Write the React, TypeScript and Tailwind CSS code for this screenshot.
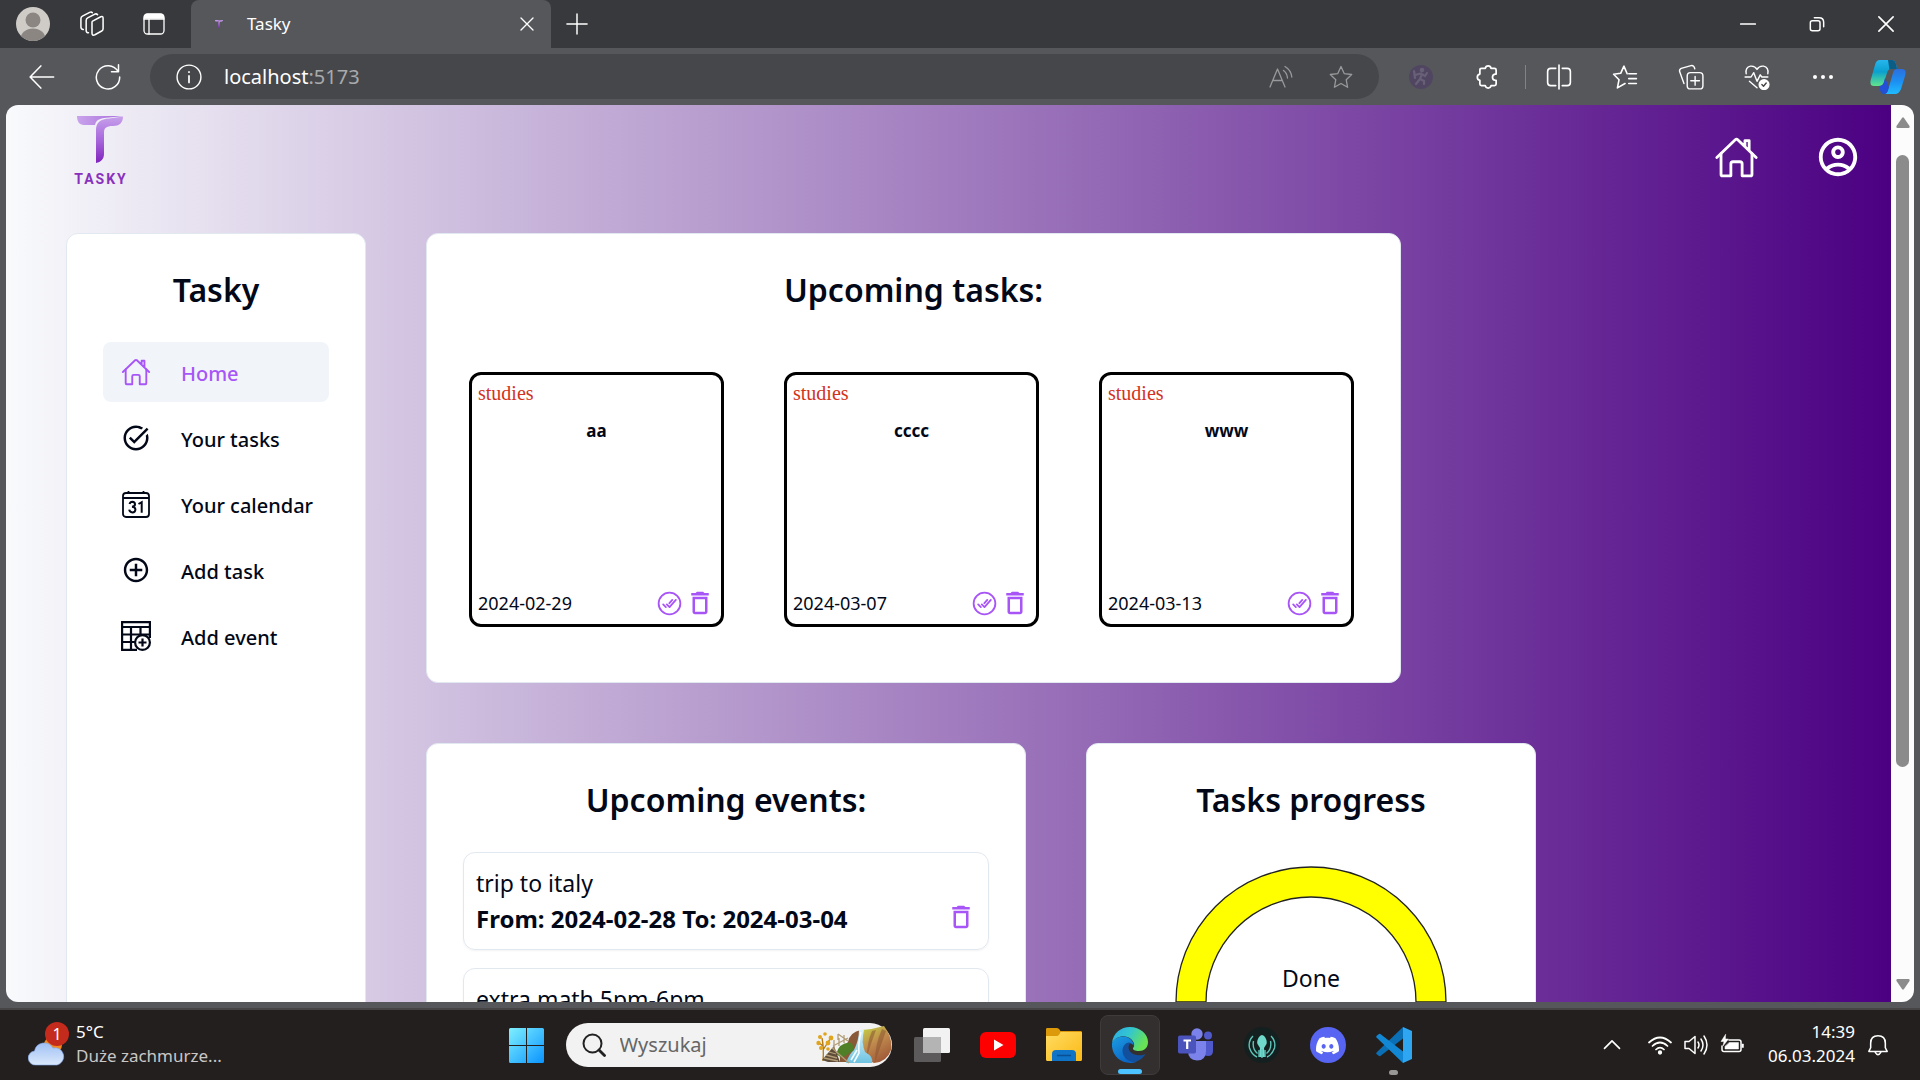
import React, { useId } from "react";
import { IoHomeOutline, IoCheckmarkDoneCircleOutline } from "react-icons/io5";
import { IoMdAddCircleOutline } from "react-icons/io";
import { MdTaskAlt, MdDeleteOutline, MdOutlineAccountCircle } from "react-icons/md";
import { SiDiscord } from "react-icons/si";

type P = { className?: string; children?: React.ReactNode };

function Line({ className = "size-6", children }: P) {
  return (
    <svg viewBox="0 0 24 24" className={className} fill="none" stroke="currentColor" strokeWidth="1.3" strokeLinecap="round" strokeLinejoin="round" aria-hidden="true">
      {children}
    </svg>
  );
}

function TLogo({ className }: P) {
  const id = useId();
  return (
    <svg viewBox="0 0 46 47" className={className} aria-hidden="true">
      <defs>
        <linearGradient id={id + "a"} x1="0" y1="0" x2="0" y2="1">
          <stop offset="0" stopColor="#c6a0ea" />
          <stop offset="0.5" stopColor="#a868dc" />
          <stop offset="1" stopColor="#8023bd" />
        </linearGradient>
        <linearGradient id={id + "b"} x1="0" y1="0" x2="1" y2="0">
          <stop offset="0" stopColor="#c9a3ec" />
          <stop offset="1" stopColor="#a86bdb" />
        </linearGradient>
      </defs>
      <path d="M0 0H46L32 1.500C25 2 19 3 18 9H7C2 9 0 5 0 0Z" fill={"url(#" + id + "b)"} />
      <path d="M46 0.500C46 7 42 10 36 10C29 10 27 12 27 17V38C27 43 24 46 19 47V14C19 6 24 3 32 2.500Z" fill={"url(#" + id + "a)"} />
    </svg>
  );
}

function CalendarAdd({ className }: P) {
  return (
    <svg viewBox="0 0 30 30" className={className} fill="none" stroke="currentColor" strokeWidth="2.2" aria-hidden="true">
      <path d="M16 28.900H1.100V1.100H28.900V17M1 6H29M1 13.500H29M1 21H14M10 6V29M19.500 6V13" />
      <circle cx="21.500" cy="21.500" r="7.400" />
      <path d="M21.500 17.500V25.500M17.500 21.500H25.500" />
    </svg>
  );
}

function CalendarDay({ className }: P) {
  return (
    <svg viewBox="0 0 28 28" className={className} fill="none" stroke="currentColor" strokeWidth="1.8" aria-hidden="true">
      <rect x="1" y="3" width="26" height="24" rx="3" />
      <path d="M1 8H27M6.500 1V4M21.500 1V4" />
      <path d="M7.500 14Q8.200 11.800 10.300 11.800Q13 11.900 13 14.300Q13 16.500 10 16.700Q13.400 16.900 13.400 19.700Q13.200 22.400 10.400 22.400Q7.600 22.300 7.200 19.700M16.500 14L19.700 12.200V22.700" strokeWidth="2" />
    </svg>
  );
}

function IconButton({ label, className = "", children }: P & { label: string }) {
  return (
    <button type="button" aria-label={label} className={"flex shrink-0 items-center justify-center " + className}>
      {children}
    </button>
  );
}

function TabStrip() {
  return (
    <div className="flex h-12 shrink-0 items-stretch bg-[#38393c] text-white">
      <div className="flex w-[191px] items-center pl-4">
        <IconButton label="Profile" className="size-[34px]">
          <svg viewBox="0 0 34 34" className="size-[34px]" aria-hidden="true">
            <clipPath id="avatar"><circle cx="17" cy="17" r="17" /></clipPath>
            <circle cx="17" cy="17" r="17" fill="#cfccc8" />
            <g clipPath="url(#avatar)" fill="#8b8682">
              <circle cx="17" cy="13" r="7.500" />
              <ellipse cx="17" cy="32" rx="12.500" ry="10.500" />
            </g>
          </svg>
        </IconButton>
        <IconButton label="Workspaces" className="ml-7">
          <Line className="size-7">
            <path d="M12.500 9.500L19.500 5.800Q21.500 5 21.500 7V16Q21.500 17.300 20.300 18L14.500 21.200Q12 22.300 12 20V10.500Q12 9.800 12.500 9.500Z" />
            <path d="M9 19.500Q7 19.500 7 17.500V9Q7 7.500 8.300 6.800L14.500 3.500Q16 3 16.800 4" />
            <path d="M4.500 16.800Q2.500 16.500 2.500 14.500V7.500Q2.500 6 3.800 5.300L10 2Q11.500 1.300 12.300 2.300" />
          </Line>
        </IconButton>
        <IconButton label="Tab actions" className="ml-9">
          <Line>
            <rect x="2" y="2" width="20" height="20" rx="3.500" />
            <path d="M2.500 6V5Q2.500 2.500 5 2.500H19Q21.500 2.500 21.500 5V6Z" fill="currentColor" />
            <path d="M2 7H22M7 7V22" />
          </Line>
        </IconButton>
      </div>
      <div role="tab" aria-selected="true" className="flex w-[360px] items-center rounded-t-lg bg-[#56575b] pr-4 pl-6">
        <TLogo className="h-3 w-2" />
        <span className="ml-6 flex-1 text-[17px]">Tasky</span>
        <IconButton label="Close tab">
          <Line className="size-4"><path strokeWidth="2" d="M3 3L21 21M21 3L3 21" /></Line>
        </IconButton>
      </div>
      <IconButton label="New tab" className="w-[52px]">
        <Line className="size-[22px]"><path strokeWidth="1.600" d="M12 1V23M1 12H23" /></Line>
      </IconButton>
      <div className="flex-1" />
      <IconButton label="Minimize" className="w-[69px]">
        <Line className="size-4"><path strokeWidth="2.500" d="M1 12H23" /></Line>
      </IconButton>
      <IconButton label="Restore" className="w-[69px]">
        <Line className="size-4"><rect strokeWidth="2.200" x="2" y="7" width="14.500" height="15" rx="3" /><path strokeWidth="2.200" d="M8 2.500H15Q22 2.500 22 9.500V16" /></Line>
      </IconButton>
      <IconButton label="Close window" className="w-[69px]">
        <Line className="size-[18px]"><path strokeWidth="2.200" d="M2.500 2.500L21.500 21.500M21.500 2.500L2.500 21.500" /></Line>
      </IconButton>
    </div>
  );
}

function Copilot() {
  return (
    <svg viewBox="0 0 36 34" className="h-[34px] w-9" aria-hidden="true">
      <defs>
        <linearGradient id="cpA" x1="0.300" y1="0" x2="0.300" y2="1"><stop offset="0" stopColor="#27b6ee" /><stop offset="0.450" stopColor="#0aa0cf" /><stop offset="1" stopColor="#62e48c" /></linearGradient>
        <linearGradient id="cpB" x1="0" y1="0" x2="0" y2="1"><stop offset="0" stopColor="#2c6fe0" /><stop offset="0.500" stopColor="#1c8ff2" /><stop offset="1" stopColor="#1fbcff" /></linearGradient>
      </defs>
      <path d="M10 0H22Q25 0 26 4L27 9H21Q18 9 17 13L14 22Q13 26 9 26H4Q-1 26 1 19L5 5Q6 0 10 0Z" fill="url(#cpA)" />
      <path d="M18 0H22Q25 0 26 4L27 9H21Q20 9 19.500 10Z" fill="#0b5d86" />
      <path d="M27 9H32Q37 9 35 16L31 29Q29 34 25 34H14Q17 34 18 30L23 13Q24 9 27 9Z" fill="url(#cpB)" />
      <path d="M9 26Q13 26 14 22L15 18L19 27L18 30Q17 34 14 34Q11 34 10 30Z" fill="#2350d6" />
    </svg>
  );
}

function Toolbar() {
  return (
    <div className="flex h-[57px] shrink-0 items-center bg-[#56575b] text-white">
      <div className="flex w-[150px] items-center gap-[38px] pl-[28px]">
        <IconButton label="Back"><Line className="size-7"><path d="M22 12H2M11 2.500L1.800 12L11 21.500" /></Line></IconButton>
        <IconButton label="Refresh"><Line className="size-7"><path d="M20.500 7A10 10 0 1 0 22 12M21 1.500V7.500H15" /></Line></IconButton>
      </div>
      <div className="flex h-[45px] flex-1 items-center rounded-full bg-[#46474a] pr-[26px] pl-[26px]">
        <Line className="size-[26px]"><circle cx="12" cy="12" r="11" /><path d="M12 11V17M12 7.300V7.500" strokeWidth="1.600" /></Line>
        <div className="ml-[22px] flex flex-1 items-center text-[20px] leading-7">
          <input aria-label="Address" defaultValue="localhost" className="field-sizing-content bg-transparent outline-none" />
          <span className="text-[#a9aaac]">:5173</span>
        </div>
        <div className="flex items-center gap-9 text-[#98999b]">
          <IconButton label="Read aloud">
            <Line><path d="M1 22L8.500 4L16 22M3.800 15.500H13.200M14.500 5.500Q18 8 18.500 13M16 1.500Q22 5 22.800 12" /></Line>
          </IconButton>
          <IconButton label="Add to favorites">
            <Line><path d="M12 1.500L15.200 8.600L22.700 9.500L17.200 14.700L18.600 22.300L12 18.500L5.400 22.300L6.800 14.700L1.300 9.500L8.800 8.600Z" /></Line>
          </IconButton>
        </div>
      </div>
      <div className="flex items-center pl-[30px]">
        <IconButton label="Extension" className="size-6">
          <svg viewBox="0 0 24 24" className="size-6" aria-hidden="true">
            <circle cx="12" cy="12" r="12" fill="#514662" />
            <g fill="none" stroke="#676076" strokeWidth="2.2" strokeLinecap="round">
              <path d="M13 9L11 14L7 19M11 14L15 16V19M6 10L12 8.500L16 11L18 8M5 6L6 13" />
              <circle cx="13" cy="5" r="1.200" />
            </g>
          </svg>
        </IconButton>
        <IconButton label="Extensions" className="ml-[42px]">
          <Line className="size-[26px]"><path strokeWidth="1.6" d="M9.500 4A2.700 2.700 0 0 1 14.800 4H18Q19.500 4 19.500 5.500V9.300H18.500A2.900 2.900 0 0 0 18.500 15H19.500V18.500Q19.500 20 18 20H14.800A2.700 2.700 0 0 1 9.500 20H6Q4.500 20 4.500 18.500V15A2.900 2.900 0 0 1 4.500 9.300V5.500Q4.500 4 6 4Z" /></Line>
        </IconButton>
        <div className="mr-5 ml-6 h-6 w-px bg-[#828386]" />
        <div className="flex items-center gap-10">
          <IconButton label="Split screen">
            <Line className="size-[26px]"><path d="M9 4H4.500Q1.500 4 1.500 7V17Q1.500 20 4.500 20H9M15 4H19.500Q22.500 4 22.500 7V17Q22.500 20 19.500 20H15M12 1V23" strokeWidth="1.500" /></Line>
          </IconButton>
          <IconButton label="Favorites">
            <Line className="size-[26px]"><path d="M14 9L11 2L8 8.600L1.500 9.500L6.500 14.500L5 22L12 18M15.500 9H22.500M15.500 13.500H22.500M15.500 18H22.500" strokeWidth="1.500" /></Line>
          </IconButton>
          <IconButton label="Collections">
            <Line className="size-[26px]"><rect x="8.500" y="8" width="14.500" height="15" rx="3" /><path d="M15.800 11.500V19.500M11.800 15.500H19.800M5.500 18L1.500 7Q1 5 3 4L12 1.500Q15 1 15.500 4.500" /></Line>
          </IconButton>
          <IconButton label="Browser essentials">
            <Line className="size-[26px]"><path d="M2 9Q1 3 6 2Q10 1.500 12 5Q14 1.500 18 2Q23 3 22 9M1 12H6.500L9 8L12 16L15 10L16.500 12H22M5 16L12 22" /><circle cx="18.500" cy="19" r="4.500" fill="currentColor" /><path d="M16.500 19L18 20.500L20.500 17.500" stroke="#46474a" /></Line>
          </IconButton>
          <IconButton label="Settings and more" className="h-6 w-[26px] gap-1">
            <span className="size-1 rounded-full bg-white" />
            <span className="size-1 rounded-full bg-white" />
            <span className="size-1 rounded-full bg-white" />
          </IconButton>
        </div>
        <IconButton label="Copilot" className="mr-[14px] ml-[34px]"><Copilot /></IconButton>
      </div>
    </div>
  );
}

const nav = [
  { label: "Home", icon: <IoHomeOutline className="size-[30px]" />, active: true },
  { label: "Your tasks", icon: <MdTaskAlt className="size-[30px]" /> },
  { label: "Your calendar", icon: <CalendarDay className="size-[28px]" /> },
  { label: "Add task", icon: <IoMdAddCircleOutline className="size-[30px]" /> },
  { label: "Add event", icon: <CalendarAdd className="size-[30px]" /> },
];

const tasks = [
  { name: "aa", date: "2024-02-29" },
  { name: "cccc", date: "2024-03-07" },
  { name: "www", date: "2024-03-13" },
];

const events = [
  { name: "trip to italy", from: "2024-02-28", to: "2024-03-04" },
  { name: "extra math 5pm-6pm", from: "2024-03-06", to: "2024-03-06" },
];

function Title({ children }: P) {
  return <h2 className="text-center text-[32px] leading-9 font-semibold">{children}</h2>;
}

function Sidebar() {
  return (
    <aside className="w-[300px] shrink-0 rounded-xl border border-slate-200 bg-white px-9 pt-[38px]">
      <Title>Tasky</Title>
      <nav className="mt-[34px] flex flex-col gap-1.5">
        {nav.map((n) => (
          <a key={n.label} href="#" className={"flex h-[60px] items-center rounded-lg pl-4 text-[20px] font-medium " + (n.active ? "bg-slate-100 text-[#a855f7]" : "text-[#020817]")}>
            <span className="flex w-[34px] justify-center">{n.icon}</span>
            <span className="pt-1 pl-7">{n.label}</span>
          </a>
        ))}
      </nav>
    </aside>
  );
}

function Page() {
  return (
    <main className="min-w-0 flex-1 overflow-hidden bg-[linear-gradient(90deg,#f8fafc,#4b0082)] pr-[34px] pl-[60px] text-[#020817]">
      <header className="flex h-32 items-start justify-between">
        <a href="#" aria-label="Tasky home" className="flex w-[68px] flex-col items-center pt-[11px]">
          <TLogo className="h-[47px] w-[46px]" />
          <span className="mt-1 pl-0.5 font-[Roboto,sans-serif] text-[14px] leading-6 font-bold tracking-[2px] text-[#8a30bd]">TASKY</span>
        </a>
        <div className="flex items-center gap-14 pt-[29px] text-white">
          <a href="#" aria-label="Home"><IoHomeOutline className="size-[45px]" /></a>
          <a href="#" aria-label="Account"><MdOutlineAccountCircle className="-mr-1 size-[46px]" /></a>
        </div>
      </header>
      <div className="flex items-stretch gap-[60px]">
        <Sidebar />
        <div className="flex flex-col gap-[60px]">
          <section className="h-[450px] w-[975px] rounded-xl border border-slate-200 bg-white px-[42px] pt-[38px]">
            <Title>Upcoming tasks:</Title>
            <div className="mt-16 flex gap-[60px]">
              {tasks.map((t) => (
                <article key={t.name} className="flex size-[255px] flex-col rounded-xl border-3 border-black px-1.5 pt-1 pb-1.5">
                  <p className="font-['Liberation_Serif',serif] text-[20px] leading-7 text-[#d33220]">studies</p>
                  <h3 className="mt-2.5 text-center text-[17px] leading-7 font-bold">{t.name}</h3>
                  <div className="mt-auto flex items-center justify-between">
                    <time className="text-[18px] leading-7">{t.date}</time>
                    <div className="flex items-center gap-px text-[#a855f7]">
                      <IconButton label="Mark as done"><IoCheckmarkDoneCircleOutline className="size-[29px]" /></IconButton>
                      <IconButton label="Delete task"><MdDeleteOutline className="size-[30px]" /></IconButton>
                    </div>
                  </div>
                </article>
              ))}
            </div>
          </section>
          <div className="flex items-start gap-[60px]">
            <section className="w-[600px] rounded-xl border border-slate-200 bg-white px-9 pt-[38px] pb-9">
              <Title>Upcoming events:</Title>
              <ul className="mt-[34px] flex flex-col gap-[18px]">
                {events.map((e) => (
                  <li key={e.name} className="flex h-[98px] items-center justify-between rounded-xl border border-slate-200 pr-3 pl-3 shadow-xs">
                    <div className="text-[23px] leading-9">
                      <p>{e.name}</p>
                      <p className="text-[24px] font-bold">From: {e.from} To: {e.to}</p>
                    </div>
                    <IconButton label="Delete event" className="pt-8 text-[#a855f7]"><MdDeleteOutline className="size-[30px]" /></IconButton>
                  </li>
                ))}
              </ul>
            </section>
            <section className="w-[450px] rounded-xl border border-slate-200 bg-white px-9 pt-[38px] pb-9">
              <Title>Tasks progress</Title>
              <svg viewBox="0 0 300 300" className="mx-auto mt-[34px] block size-[300px]" role="img" aria-label="Done">
                <path d="M15 150A135 135 0 0 1 285 150H255A105 105 0 0 0 45 150Z" fill="#ffff00" stroke="#222" strokeWidth="1.300" />
                <text x="150" y="135" textAnchor="middle" fontSize="23" fill="#020817">Done</text>
              </svg>
            </section>
          </div>
        </div>
      </div>
    </main>
  );
}

function Scrollbar() {
  return (
    <div className="flex w-[23px] shrink-0 flex-col items-center bg-[#fcfcfc] pt-3 pb-3 text-[#8b8b8b]">
      <svg viewBox="0 0 14 11" className="w-[14px]" fill="currentColor" aria-hidden="true"><path d="M6 1Q7-.5 8 1L13.500 9Q14 11 12.500 11H1.500Q0 11 .5 9Z" /></svg>
      <div className="mt-[27px] h-[612px] w-[13px] rounded-full bg-[#8b8b8b]" />
      <div className="flex-1" />
      <svg viewBox="0 0 14 11" className="w-[14px] rotate-180" fill="currentColor" aria-hidden="true"><path d="M6 1Q7-.5 8 1L13.500 9Q14 11 12.500 11H1.500Q0 11 .5 9Z" /></svg>
    </div>
  );
}

function Weather() {
  return (
    <svg viewBox="0 0 42 44" className="h-11 w-[42px]" aria-hidden="true">
      <defs><linearGradient id="cloud" x1="0" y1="0" x2="0" y2="1"><stop offset="0" stopColor="#9fc0f5" /><stop offset="1" stopColor="#dbe9fb" /></linearGradient></defs>
      <circle cx="25" cy="23" r="9" fill="#f58a1f" />
      <path d="M8 43A7 7 0 0 1 6.500 29A10 10 0 0 1 25 26A8.500 8.500 0 0 1 29 43Z" fill="url(#cloud)" stroke="#7fa5ea" strokeWidth=".6" />
      <circle cx="29" cy="12" r="12" fill="#c42b1c" />
      <text x="29" y="18" textAnchor="middle" fontSize="16" fill="#fff">1</text>
    </svg>
  );
}

function SearchArt() {
  return (
    <svg viewBox="0 0 76 38" className="h-[38px] w-[76px]" aria-hidden="true">
      <defs>
        <linearGradient id="hill" x1="0.200" y1="0" x2="0.700" y2="1"><stop offset="0" stopColor="#c3cc45" /><stop offset="0.450" stopColor="#c08a4e" /><stop offset="1" stopColor="#9c5535" /></linearGradient>
        <linearGradient id="fall" x1="0" y1="0" x2="0" y2="1"><stop offset="0" stopColor="#d9f3fb" /><stop offset="1" stopColor="#6ec3e0" /></linearGradient>
      </defs>
      <path d="M24 36Q22 24 32 16Q34 6 45 4L50 36Z" fill="#8a5a38" />
      <path d="M20 28Q24 15 36 17L38 24L26 32Z" fill="#4f7f26" />
      <path d="M46 4Q58 3 68 0Q77 12 75 24Q71 36 58 37L48 32Z" fill="url(#hill)" />
      <path d="M56 5Q51 16 51 31Q54 20 60 4ZM66 3Q59 18 59 36Q64 22 70 5Z" fill="#8a5330" opacity=".55" />
      <path d="M43 4H48Q45 16 49 26Q58 31 56 37H30Q33 28 38 24Q43 14 43 4Z" fill="url(#fall)" />
      <path d="M45 6Q42 18 43 27L38 36M41 24L35 34" stroke="#f4fdff" strokeWidth="1.600" fill="none" />
      <path d="M7 35Q8 22 6 12M7 24L14 13M7 20L2 16" stroke="#b5760f" strokeWidth="1.300" fill="none" />
      <g fill="#e0a51c"><circle cx="4" cy="11" r="2" /><circle cx="9" cy="8" r="1.800" /><circle cx="15" cy="12" r="2.400" /><circle cx="2.500" cy="17" r="2.200" /><circle cx="12" cy="17" r="2.400" /><circle cx="5" cy="22" r="2" /><circle cx="12" cy="23" r="1.800" /></g>
      <path d="M6 34L18 20L24 36H12Z" fill="#5e4c39" />
      <path d="M8 32L22 35M10 29L21 32M13 26L20 28M16 22L33 37M17 20L32 12M22 8L32 15M18 14V24M23 12V20M28 9V17M22 8V14" stroke="#b39d77" strokeWidth="1.300" fill="none" />
    </svg>
  );
}

function EdgeLogo() {
  return (
    <svg viewBox="0 0 36 36" className="size-9" aria-hidden="true">
      <defs>
        <linearGradient id="egA" x1="0" y1="0" x2="1" y2="0.400"><stop offset="0" stopColor="#2aa9e8" /><stop offset="0.500" stopColor="#33c6cf" /><stop offset="1" stopColor="#67e355" /></linearGradient>
        <linearGradient id="egB" x1="0" y1="0" x2="0.600" y2="1"><stop offset="0" stopColor="#1b9de2" /><stop offset="1" stopColor="#0b63c4" /></linearGradient>
      </defs>
      <path d="M0 16C1 6 9 0 18 0C28 0 36 7 36 15C36 21 32 24 27 24C23 24 20.500 23 21 21C23 19 22.500 15 19 12C13 7 4 9 0 16Z" fill="url(#egA)" />
      <path d="M0 16C3 10 10 8 16 10.500C20 12.500 22 16 21.500 19C20 15 14 15 12.500 20C10.500 27 16 35 25 34.500C23 36 20 36 18 36C8 36-1 28 0 16Z" fill="url(#egB)" />
      <path d="M15 16C7 20 10 34 22 35C27 34.500 31 31 33.500 27C30 29 22 29 18.500 25C15 21 17 17 19 16Q17 15 15 16Z" fill="#124f9c" />
    </svg>
  );
}

function TeamsLogo() {
  return (
    <svg viewBox="0 0 36 34" className="h-[34px] w-9" aria-hidden="true">
      <circle cx="30" cy="7.500" r="4" fill="#5059c9" />
      <path d="M24 13H35V23Q35 28 30 28Q26 28 24 25Z" fill="#5059c9" />
      <circle cx="19" cy="6" r="5.700" fill="#7b83eb" />
      <path d="M10 13H28V23Q28 32.500 19 32.500Q10 32 10 23Z" fill="#7b83eb" />
      <rect x="0" y="7.500" width="18" height="18" rx="1.800" fill="#4b53bc" />
      <path d="M5.500 12.500H13M9.200 12.500V21" stroke="#fff" strokeWidth="2.200" />
    </svg>
  );
}

function KrakenLogo() {
  return (
    <svg viewBox="0 0 36 36" className="size-9" aria-hidden="true">
      <circle cx="18" cy="18" r="18" fill="#14201f" />
      <path d="M18 8C22 9 23.500 15 22.500 17L20 21L21 30H15L16 21L13.500 17C12.500 15 14 9 18 8Z" fill="#6fd9cb" />
      <path d="M9 9Q4 14 5.500 21Q8 28 13 30M27 9Q32 14 30.500 21Q28 28 23 30M9.500 14Q8 22 13.500 26.500M26.500 14Q28 22 22.500 26.500M18 22V31M15 23V30M21 23V30" stroke="#5fc4b8" strokeWidth="1.400" fill="none" />
    </svg>
  );
}

function CodeLogo() {
  return (
    <svg viewBox="0 0 36 36" className="size-9" aria-hidden="true">
      <path d="M1 25Q-.5 26.500 1 27.500L3 29Q4 29.500 5 28.500L29 10L27 0Z" fill="#0a6fb4" />
      <path d="M1 11Q-.5 9.500 1 8.500L3 7Q4 6.500 5 7.500L29 26L27 36Z" fill="#1287d3" />
      <path d="M27 0L36 4V32L27 36Z" fill="#2ea6f2" />
    </svg>
  );
}

function Taskbar() {
  return (
    <footer className="grid h-[70px] shrink-0 grid-cols-[1fr_auto_1fr] items-center bg-[#231f1e] text-white">
      <button type="button" className="flex items-center gap-1.5 pb-0.5 pl-7 text-left">
        <Weather />
        <span className="text-[17px] leading-6">
          <span className="block">5°C</span>
          <span className="block text-[#c9c7c6]">Duże zachmurze...</span>
        </span>
      </button>
      <div className="flex items-center gap-[30px]">
        <IconButton label="Start" className="mr-[-8px]">
          <svg viewBox="0 0 35 35" className="size-[35px]" aria-hidden="true">
            <defs><linearGradient id="win" gradientUnits="userSpaceOnUse" x1="0" y1="0" x2="35" y2="35"><stop offset="0" stopColor="#7ff0ff" /><stop offset="1" stopColor="#0a94ff" /></linearGradient></defs>
            <path fill="url(#win)" d="M1.500 0H17V17H0V1.500Q0 0 1.500 0ZM18 0H33.500Q35 0 35 1.500V17H18ZM0 18H17V35H1.500Q0 35 0 33.500ZM18 18H35V33.500Q35 35 33.500 35H18Z" />
          </svg>
        </IconButton>
        <div className="mr-[-8px] flex h-11 w-[326px] items-center rounded-full bg-[#f2f2f2] pl-4 text-[#222]">
          <svg viewBox="0 0 24 24" className="size-6" fill="none" stroke="currentColor" strokeWidth="2" strokeLinecap="round" aria-hidden="true"><circle cx="10.500" cy="10.500" r="9" /><path d="M17 17L22.500 22.500" strokeWidth="2.800" /></svg>
          <input aria-label="Wyszukaj" placeholder="Wyszukaj" className="ml-3.5 w-0 flex-1 bg-transparent text-[20px] outline-none placeholder:text-[#666]" />
          <SearchArt />
        </div>
        <IconButton label="Task view">
          <svg viewBox="0 0 36 34" className="h-[34px] w-9" aria-hidden="true"><rect x="0" y="9" width="27" height="25" rx="1.500" fill="#5c5a5a" /><rect x="9" y="0" width="27" height="25" rx="1.500" fill="#f2f2f2" /><path d="M9 9H27V25H9Z" fill="#b5b4b4" /></svg>
        </IconButton>
        <IconButton label="YouTube">
          <svg viewBox="0 0 36 26" className="h-[26px] w-9" aria-hidden="true"><rect width="36" height="26" rx="6" fill="#f00" /><path d="M14 7.500V18.500L23.500 13Z" fill="#fff" /></svg>
        </IconButton>
        <IconButton label="File Explorer">
          <svg viewBox="0 0 36 34" className="h-[34px] w-9" aria-hidden="true">
            <defs><linearGradient id="fold" x1="0" y1="0" x2="1" y2="1"><stop offset="0" stopColor="#ffdc62" /><stop offset="1" stopColor="#fbb916" /></linearGradient></defs>
            <path d="M0 1Q0 0 1.500 0H11Q13 0 14.500 3H35Q36 3 36 4.500V10H0Z" fill="#dc9a0b" />
            <path d="M0 8H11Q13 8 14.500 4H35Q36 4 36 5V31.500Q36 33 34.500 33H1.500Q0 33 0 31.500Z" fill="url(#fold)" />
            <path d="M6 33V26Q6 22 10 22H26Q30 22 30 26V33Z" fill="#0f74c8" /><path d="M11 27.500H25" stroke="#0a4f92" strokeWidth="1.500" />
          </svg>
        </IconButton>
        <IconButton label="Microsoft Edge" className="relative -mx-3 size-[60px] rounded-lg border border-[#3f3b3a] bg-[#332f2e]">
          <EdgeLogo />
          <span className="absolute bottom-0 h-[5px] w-6 rounded-full bg-[#4cc2ff]" />
        </IconButton>
        <IconButton label="Teams"><TeamsLogo /></IconButton>
        <IconButton label="GitKraken"><KrakenLogo /></IconButton>
        <IconButton label="Discord" className="size-9 rounded-full bg-[#5865f2]"><SiDiscord className="size-[23px]" /></IconButton>
        <IconButton label="Visual Studio Code" className="relative h-[60px]">
          <CodeLogo />
          <span className="absolute bottom-0 h-[5px] w-[9px] rounded-full bg-[#9a9897]" />
        </IconButton>
      </div>
      <div className="flex items-center justify-end pr-[31px]">
        <IconButton label="Hidden icons" className="mr-[26px]"><Line className="size-5"><path strokeWidth="2" d="M3 16L12 7L21 16" /></Line></IconButton>
        <IconButton label="Network and sound" className="gap-3">
          <Line><path d="M1 9.500Q12-.5 23 9.500M4.500 13Q12 6 19.500 13M8 16.500Q12 12.500 16 16.500" strokeWidth="1.700" /><circle cx="12" cy="19.500" r="1.500" fill="currentColor" /></Line>
          <Line><path d="M1 8.500H5L11 3.500V20.500L5 15.500H1ZM14 9Q16 12 14 15M17 6Q21 12 17 18M20 3Q26 12 20 21" strokeWidth="1.500" /></Line>
          <Line><path d="M5 18.500H19Q21 18.500 21 16.500V9Q21 7 19 7H9M2 13V16.500Q2 18.500 4 18.500" strokeWidth="1.500" /><path d="M9.500 9.500H18.500V16H5V13.500ZM22 11H23.500V14.500H22ZM5.500 1.500L1 8.500H4L3 13L8.500 6H5.500Z" fill="currentColor" strokeWidth=".5" /></Line>
        </IconButton>
        <time className="ml-6 pb-0.5 text-right text-[17px] leading-6">14:39<br />06.03.2024</time>
        <IconButton label="Notifications" className="ml-3"><Line className="size-[22px]"><path strokeWidth="1.700" d="M2 19H22L20 15V10Q20 2 12 2Q4 2 4 10V15ZM9 20Q12 25 15 20" /></Line></IconButton>
      </div>
    </footer>
  );
}

export default function App() {
  return (
    <div className="flex h-screen flex-col overflow-hidden bg-[#56575b] font-['Noto_Sans','Open_Sans',sans-serif]">
      <TabStrip />
      <Toolbar />
      <div className="mx-1.5 flex min-h-0 flex-1 overflow-hidden rounded-xl">
        <Page />
        <Scrollbar />
      </div>
      <div className="h-2 shrink-0 border-b-2 border-[#464444] bg-[#56575b]" />
      <Taskbar />
    </div>
  );
}
